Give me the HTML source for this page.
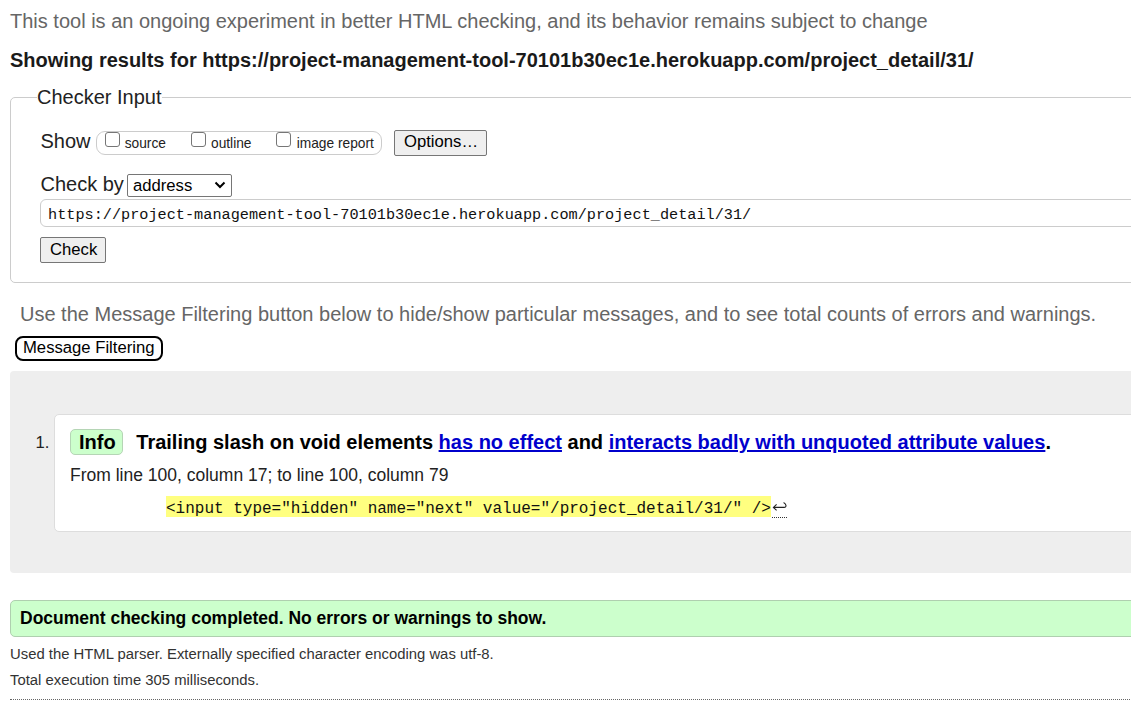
<!DOCTYPE html>
<html><head><meta charset="utf-8">
<style>
html,body{margin:0;padding:0;background:#fff;}
body{width:1131px;height:713px;overflow:hidden;position:relative;font-family:"Liberation Sans",sans-serif;color:#000;}
.a{position:absolute;white-space:pre;line-height:1;}
.mono{font-family:"Liberation Mono",monospace;}
#about{left:10px;top:11px;font-size:20px;color:#666;}
#h2{left:10px;top:50px;font-size:20px;font-weight:bold;color:#1a1a1a;}
#fs{position:absolute;left:10px;top:97px;width:1200px;height:186px;border:1px solid #ccc;border-radius:5px;box-sizing:border-box;}
#legend{left:37px;top:87px;font-size:20px;color:#222;background:#fff;padding:0 0.5px 0 0;}
#show{left:40.5px;top:131px;font-size:20px;color:#222;}
#opts{position:absolute;left:96px;top:131px;width:286px;height:24px;border:1px solid #ccc;border-radius:9px;box-sizing:border-box;}
.cb{position:absolute;top:132px;width:15px;height:15px;border:1.5px solid #767676;border-radius:3px;box-sizing:border-box;background:#fff;}
.lbl{top:137px;font-size:13.75px;color:#222;}
.btn{position:absolute;box-sizing:border-box;border:1px solid #767676;background:#efefef;border-radius:2px;}
.btxt{font-size:16.67px;color:#000;}
#checkby{left:40.5px;top:174px;font-size:20px;color:#222;}
#sel{position:absolute;left:127px;top:174px;width:105px;height:23px;border:1px solid #767676;border-radius:2px;box-sizing:border-box;background:#fff;}
#url{position:absolute;left:40px;top:199px;width:1200px;height:28px;border:1px solid #ccc;border-radius:6px;box-sizing:border-box;}
#urltxt{left:48px;top:208px;font-size:15.23px;color:#111;}
#use{left:20px;top:304px;font-size:20px;color:#666;}
#mf{position:absolute;left:15px;top:336px;width:148px;height:25px;border:2px solid #000;border-radius:8px;box-sizing:border-box;background:#fff;}
#mftxt{left:23px;top:340px;font-size:16.67px;color:#000;}
#grey{position:absolute;left:10px;top:371px;width:1200px;height:202px;background:#eee;border-radius:4px;}
#li{position:absolute;left:54px;top:414px;width:1200px;height:118px;background:#fff;border:1px solid #ddd;border-radius:5px;box-sizing:border-box;}
#num{left:35.5px;top:435px;font-size:16.67px;color:#222;}
#badge{position:absolute;left:70px;top:429px;width:52.5px;height:25.5px;background:#ccffcc;border:1px solid #b5d5b5;border-radius:5px;box-sizing:border-box;}
#info{left:79px;top:432px;font-size:20px;font-weight:bold;color:#000;}
#msg{left:136.3px;top:432px;font-size:20px;font-weight:bold;color:#000;}
#msg a{color:#0000cc;text-decoration:underline;}
#from{left:70px;top:467px;font-size:17.5px;color:#222;}
#code{left:166px;top:496px;font-size:16px;color:#111;background:#ffff80;padding:5px 0 0 0;height:15.5px;}
#ret{position:absolute;left:770px;top:498px;}
#green{position:absolute;left:10px;top:600px;width:1200px;height:37px;background:#ccffcc;border:1px solid #afcfaf;border-radius:5px;box-sizing:border-box;}
#done{left:20px;top:610px;font-size:17.5px;font-weight:bold;color:#000;}
#used{left:10px;top:647px;font-size:14.85px;color:#333;}
#total{left:10px;top:673px;font-size:14.85px;color:#333;}
#hr{position:absolute;left:10px;top:699px;width:1200px;height:0;border-top:1px dotted #666;}
</style></head><body>
<div id="about" class="a">This tool is an ongoing experiment in better HTML checking, and its behavior remains subject to change</div>
<div id="h2" class="a">Showing results for https://project-management-tool-70101b30ec1e.herokuapp.com/project_detail/31/</div>

<div id="fs"></div>
<div id="legend" class="a">Checker Input</div>
<div id="show" class="a">Show</div>
<div id="opts"></div>
<div class="cb" style="left:105px"></div><div class="a lbl" style="left:124.7px">source</div>
<div class="cb" style="left:191px"></div><div class="a lbl" style="left:211px">outline</div>
<div class="cb" style="left:276px"></div><div class="a lbl" style="left:296.7px">image report</div>
<div class="btn" style="left:394px;top:130px;width:93px;height:26px;"></div><div class="a btxt" style="left:404px;top:134px">Options…</div>

<div id="checkby" class="a">Check by</div>
<div id="sel"></div><div class="a" style="left:133px;top:178px;font-size:16.67px;color:#000">address</div>
<svg style="position:absolute;left:214px;top:181px" width="12" height="8" viewBox="0 0 12 8"><path d="M1.5 1.5 L6 6 L10.5 1.5" fill="none" stroke="#000" stroke-width="2"/></svg>
<div id="url"></div>
<div id="urltxt" class="a mono">https://project-management-tool-70101b30ec1e.herokuapp.com/project_detail/31/</div>
<div class="btn" style="left:40px;top:237px;width:66px;height:26px;"></div><div class="a btxt" style="left:50px;top:242px">Check</div>

<div id="use" class="a">Use the Message Filtering button below to hide/show particular messages, and to see total counts of errors and warnings.</div>
<div id="mf"></div><div id="mftxt" class="a">Message Filtering</div>

<div id="grey"></div>
<div id="li"></div>
<div id="num" class="a">1.</div>
<div id="badge"></div>
<div id="info" class="a">Info</div>
<div id="msg" class="a">Trailing slash on void elements <a>has no effect</a> and <a>interacts badly with unquoted attribute values</a>.</div>
<div id="from" class="a">From line 100, column 17; to line 100, column 79</div>
<div id="code" class="a mono">&lt;input type="hidden" name="next" value="/project_detail/31/" /&gt;</div>
<svg id="ret" width="20" height="22" viewBox="0 0 20 22"><path d="M3.4 9.4 H14.2 C16.6 9.4 16.8 6.2 13.6 4.4 M6.6 6.4 L3.4 9.4 L6.6 12.4" fill="none" stroke="#222" stroke-width="1.1"/><path d="M2 19.5 H17.2" stroke="#333" stroke-width="1" stroke-dasharray="1 1"/></svg>

<div id="green"></div>
<div id="done" class="a">Document checking completed. No errors or warnings to show.</div>
<div id="used" class="a">Used the HTML parser. Externally specified character encoding was utf-8.</div>
<div id="total" class="a">Total execution time 305 milliseconds.</div>
<div id="hr"></div>
</body></html>
